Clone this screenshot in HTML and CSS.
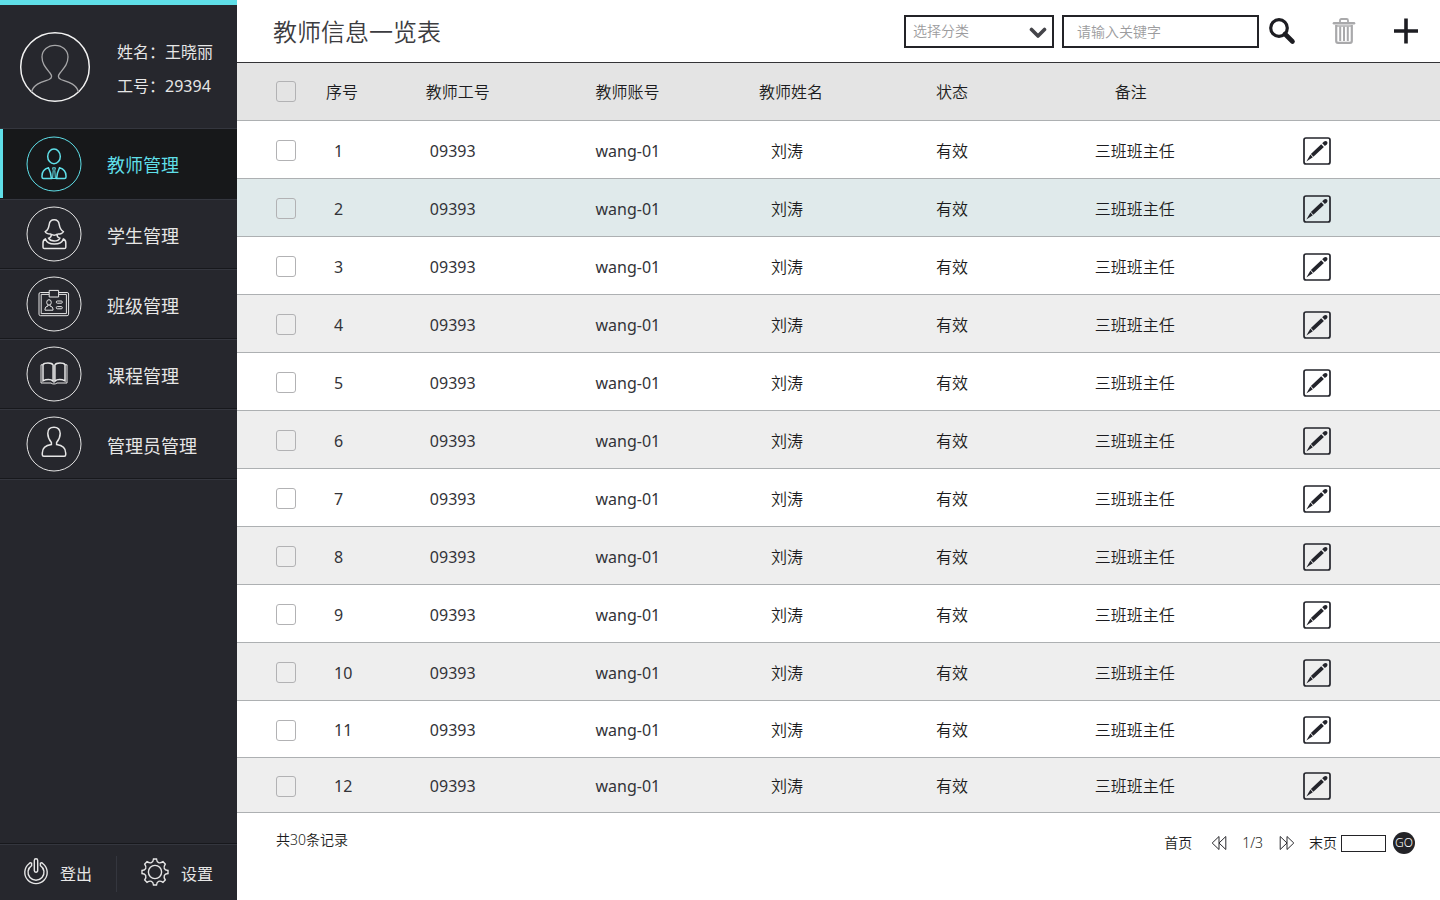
FILE: index.html
```html
<!DOCTYPE html>
<html lang="zh-CN">
<head>
<meta charset="utf-8">
<title>教师信息一览表</title>
<link rel="stylesheet" href="styles.css">
</head>
<body>
<svg class="defs" aria-hidden="true">
  <symbol id="edit" viewBox="0 0 28 28">
    <rect x="1" y="1" width="26" height="26" rx="2" fill="none" stroke="#23242b" stroke-width="1.7"/>
    <path d="M3.4 24.4 L7.4 17.6 L9.8 20.2 Z" fill="#23242b"/>
    <path d="M7.9 17 L18.2 7.2 L20.9 10 L10.4 19.7 Z" fill="#23242b"/>
    <path d="M19.2 6.3 L21 4.6 Q22.6 3.2 24 4.6 Q25.2 6 23.8 7.4 L21.9 9.1 Z" fill="#23242b"/>
  </symbol>
</svg>
<div class="app">
  <aside class="sidebar">
    <div class="profile">
      <svg class="avatar" viewBox="-36 -36 72 72" aria-hidden="true">
        <circle r="34.3" stroke="#f2f2f2" stroke-width="1.5"/>
        <path d="M-23.5 25 C-21 16 -11 14.5 -6 12.5 C-2.5 11 -3 8.5 -5 6 C-9 1 -13 -3 -13 -10 C-13 -17 -7 -21.7 0 -21.7 C7 -21.7 13 -17 13 -10 C13 -3 9 1 5 6 C3 8.5 2.5 11 6 12.5 C11 14.5 21 16 23.5 25" stroke="#a6a6a8" stroke-width="1.3"/>
      </svg>
      <div class="who">
        <span>姓名<span class="colon">：</span>王晓丽</span>
        <span>工号<span class="colon">：</span>29394</span>
      </div>
    </div>
    <nav class="menu">
      <a class="item active" href="#">
        <svg class="ring" viewBox="-28 -28 56 56" aria-hidden="true">
          <circle r="27"/>
          <g class="bold"><ellipse cx="0" cy="-7.6" rx="6.3" ry="7.3"/>
          <path d="M-5.5 3.8 C-10 5 -12 7.4 -12 12 V13 Q-12 14.5 -10.5 14.5 H-2.6 C-2.8 11 -3.8 7 -5.5 3.8 Z M5.5 3.8 C10 5 12 7.4 12 12 V13 Q12 14.5 10.5 14.5 H2.6 C2.8 11 3.8 7 5.5 3.8 Z"/></g>
          <path d="M-1.4 3.8 H1.4 L0.8 6.4 L1.4 14.5 H-1.4 L-0.8 6.4 Z M-2.6 14.5 H2.6"/>
        </svg>
        <span>教师管理</span>
      </a>
      <a class="item" href="#">
        <svg class="ring" viewBox="-28 -28 56 56" aria-hidden="true">
          <circle r="27"/>
          <g class="bold"><path d="M-3 0 C-6 0.3 -8.5 -1 -8.8 -2.4 C-5.5 -4 -5.2 -7 -4.8 -9.5 C-4 -16 4.4 -16 5.2 -9.5 C5.6 -7 6 -4 9.4 -2.4 C9 -1 6.4 0.3 3.4 0"/>
          <path d="M-3 0 C-2.4 2 -3 3.4 -5.4 4.2 C-3.5 8 4 8 5.8 4.2 C3.4 3.4 2.8 2 3.4 0 M-3 0 Q0.2 2.6 3.4 0"/>
          <path d="M-8.6 5 Q-11 6 -11 9 V13.2 Q-11 14.6 -9.6 14.6 H10.4 Q11.8 14.6 11.8 13.2 V9 Q11.8 6 9.4 5 C7 11.8 -6.2 11.8 -8.6 5 Z"/></g>
        </svg>
        <span>学生管理</span>
      </a>
      <a class="item" href="#">
        <svg class="ring" viewBox="-28 -28 56 56" aria-hidden="true">
          <circle r="27"/>
          <rect x="-15" y="-11.5" width="29.6" height="23.2" rx="1.5"/>
          <path d="M-5 -9.6 H-12.8 V9.6 H12.4 V-9.6 H4.8"/>
          <path d="M-4.8 -13.6 H4.6 V-7 H-4.8 Z" fill="#26272d"/>
          <ellipse cx="-5" cy="-1.6" rx="2.3" ry="2.7"/>
          <path d="M-6 1 V2 Q-9 2.6 -9 5 V6.2 H-1 V5 Q-1 2.6 -4 2 V1"/>
          <rect x="2.3" y="-3" width="6" height="2.2" rx="1"/><rect x="2.3" y="2.6" width="6" height="2.2" rx="1"/>
        </svg>
        <span>班级管理</span>
      </a>
      <a class="item" href="#">
        <svg class="ring" viewBox="-28 -28 56 56" aria-hidden="true">
          <circle r="27"/>
          <path class="bold" d="M-0.9 -9 Q-2 -11 -6 -11 Q-10 -11 -11 -9.4 V6.8 Q-8.6 5.6 -5.5 5.6 Q-2.4 5.6 -0.9 7.2 Z M0.9 -9 Q2 -11 6 -11 Q10 -11 11 -9.4 V6.8 Q8.6 5.6 5.5 5.6 Q2.4 5.6 0.9 7.2 Z"/>
          <path d="M-11 -9.2 H-13 V9 H-3 Q-2 10 0 10 Q2 10 3 9 H13 V-9.2 H11"/>
        </svg>
        <span>课程管理</span>
      </a>
      <a class="item" href="#">
        <svg class="ring" viewBox="-28 -28 56 56" aria-hidden="true">
          <circle r="27"/>
          <path class="bold" d="M-2.6 -1.6 C-4.6 -4 -6.2 -7 -6.2 -10.6 C-6.2 -14.4 -3.8 -16.8 0 -16.8 C3.8 -16.8 6.2 -14.4 6.2 -10.6 C6.2 -7 4.6 -4 2.6 -1.6 V0.6 C8 1.4 11.7 4 11.7 9 V10.8 Q11.7 12.3 10.2 12.3 H-10.2 Q-11.7 12.3 -11.7 10.8 V9 C-11.7 4 -8 1.4 -2.6 0.6 Z"/>
        </svg>
        <span>管理员管理</span>
      </a>
    </nav>
    <div class="side-foot">
      <button class="side-btn logout" type="button">
        <svg viewBox="-14 -14 28 28" aria-hidden="true"><rect x="-1.7" y="-13.2" width="3.4" height="13.4" rx="1.7"/><path d="M-4.4 -8.8 V-6.4 A8 8 0 1 0 4.4 -6.4 V-8.8 Q5.6 -9.8 7 -8.3 A11.2 11.2 0 1 1 -7 -8.3 Q-5.6 -9.8 -4.4 -8.8 Z"/></svg>
        <span>登出</span>
      </button>
      <button class="side-btn settings" type="button">
        <svg viewBox="-14 -14 28 28" aria-hidden="true"><circle r="6.6"/><path d="M-3.6 -9.3 Q-1.8 -10 -1.5 -13 H1.5 Q1.8 -10 3.6 -9.3 Q5.4 -8.6 8 -10.3 L10.3 -8 Q8.6 -5.4 9.3 -3.6 Q10 -1.8 13 -1.5 V1.5 Q10 1.8 9.3 3.6 Q8.6 5.4 10.3 8 L8 10.3 Q5.4 8.6 3.6 9.3 Q1.8 10 1.5 13 H-1.5 Q-1.8 10 -3.6 9.3 Q-5.4 8.6 -8 10.3 L-10.3 8 Q-8.6 5.4 -9.3 3.6 Q-10 1.8 -13 1.5 V-1.5 Q-10 -1.8 -9.3 -3.6 Q-8.6 -5.4 -10.3 -8 L-8 -10.3 Q-5.4 -8.6 -3.6 -9.3 Z"/></svg>
        <span>设置</span>
      </button>
    </div>
  </aside>

  <main class="main">
    <header class="topbar">
      <h1>教师信息一览表</h1>
      <div class="tools">
        <div class="select">
          <select aria-label="选择分类"><option>选择分类</option></select>
          <svg viewBox="0 0 18 12" aria-hidden="true"><path d="M2.5 2.5 L9 9 L15.5 2.5" fill="none" stroke="#444449" stroke-width="3.6" stroke-linecap="round" stroke-linejoin="round"/></svg>
        </div>
        <input class="keyword" type="text" placeholder="请输入关键字" aria-label="关键字">
        <button class="tool search" type="button" aria-label="搜索">
          <svg viewBox="0 0 28 28"><circle cx="11" cy="11" r="8.3" fill="none" stroke="#1d1d22" stroke-width="3.2"/><path d="M17 17 L24.5 24.5" stroke="#1d1d22" stroke-width="4.6" stroke-linecap="round"/></svg>
        </button>
        <button class="tool trash" type="button" aria-label="删除">
          <svg viewBox="0 0 28 28" fill="none" stroke="#a9a9ab"><path d="M4 6.2 H24" stroke-width="2.6" stroke-linecap="round"/><path d="M10 5.5 V3.4 Q10 2 11.4 2 H16.6 Q18 2 18 3.4 V5.5" stroke-width="1.8"/><path d="M6.2 8 V24 Q6.2 25.8 8 25.8 H20 Q21.8 25.8 21.8 24 V8" stroke-width="2.2"/><path d="M10.2 9.5 V24 M14 9.5 V24 M17.8 9.5 V24" stroke-width="2"/><path d="M6 9 H22" stroke-width="1.4"/></svg>
        </button>
        <button class="tool add" type="button" aria-label="新增">
          <svg viewBox="0 0 28 28"><path d="M14 1.5 V26.5 M2 14 H26" stroke="#1d1d22" stroke-width="3.6"/></svg>
        </button>
      </div>
    </header>

    <table class="grid">
      <colgroup><col class="c-check"><col class="c-no"><col class="c-id"><col class="c-account"><col class="c-name"><col class="c-status"><col class="c-note"><col class="c-edit"></colgroup>
      <thead>
        <tr><th><input type="checkbox" aria-label="全选"></th><th>序号</th><th>教师工号</th><th>教师账号</th><th>教师姓名</th><th>状态</th><th>备注</th><th></th></tr>
      </thead>
      <tbody>
        <tr><td><input type="checkbox" aria-label="选择第1行"></td><td>1</td><td>09393</td><td>wang-01</td><td>刘涛</td><td>有效</td><td>三班班主任</td><td><button type="button" aria-label="编辑"><svg><use href="#edit"/></svg></button></td></tr>
        <tr class="current"><td><input type="checkbox" aria-label="选择第2行"></td><td>2</td><td>09393</td><td>wang-01</td><td>刘涛</td><td>有效</td><td>三班班主任</td><td><button type="button" aria-label="编辑"><svg><use href="#edit"/></svg></button></td></tr>
        <tr><td><input type="checkbox" aria-label="选择第3行"></td><td>3</td><td>09393</td><td>wang-01</td><td>刘涛</td><td>有效</td><td>三班班主任</td><td><button type="button" aria-label="编辑"><svg><use href="#edit"/></svg></button></td></tr>
        <tr><td><input type="checkbox" aria-label="选择第4行"></td><td>4</td><td>09393</td><td>wang-01</td><td>刘涛</td><td>有效</td><td>三班班主任</td><td><button type="button" aria-label="编辑"><svg><use href="#edit"/></svg></button></td></tr>
        <tr><td><input type="checkbox" aria-label="选择第5行"></td><td>5</td><td>09393</td><td>wang-01</td><td>刘涛</td><td>有效</td><td>三班班主任</td><td><button type="button" aria-label="编辑"><svg><use href="#edit"/></svg></button></td></tr>
        <tr><td><input type="checkbox" aria-label="选择第6行"></td><td>6</td><td>09393</td><td>wang-01</td><td>刘涛</td><td>有效</td><td>三班班主任</td><td><button type="button" aria-label="编辑"><svg><use href="#edit"/></svg></button></td></tr>
        <tr><td><input type="checkbox" aria-label="选择第7行"></td><td>7</td><td>09393</td><td>wang-01</td><td>刘涛</td><td>有效</td><td>三班班主任</td><td><button type="button" aria-label="编辑"><svg><use href="#edit"/></svg></button></td></tr>
        <tr><td><input type="checkbox" aria-label="选择第8行"></td><td>8</td><td>09393</td><td>wang-01</td><td>刘涛</td><td>有效</td><td>三班班主任</td><td><button type="button" aria-label="编辑"><svg><use href="#edit"/></svg></button></td></tr>
        <tr><td><input type="checkbox" aria-label="选择第9行"></td><td>9</td><td>09393</td><td>wang-01</td><td>刘涛</td><td>有效</td><td>三班班主任</td><td><button type="button" aria-label="编辑"><svg><use href="#edit"/></svg></button></td></tr>
        <tr><td><input type="checkbox" aria-label="选择第10行"></td><td>10</td><td>09393</td><td>wang-01</td><td>刘涛</td><td>有效</td><td>三班班主任</td><td><button type="button" aria-label="编辑"><svg><use href="#edit"/></svg></button></td></tr>
        <tr><td><input type="checkbox" aria-label="选择第11行"></td><td>11</td><td>09393</td><td>wang-01</td><td>刘涛</td><td>有效</td><td>三班班主任</td><td><button type="button" aria-label="编辑"><svg><use href="#edit"/></svg></button></td></tr>
        <tr><td><input type="checkbox" aria-label="选择第12行"></td><td>12</td><td>09393</td><td>wang-01</td><td>刘涛</td><td>有效</td><td>三班班主任</td><td><button type="button" aria-label="编辑"><svg><use href="#edit"/></svg></button></td></tr>
      </tbody>
    </table>

    <footer class="bottom">
      <span class="total">共30条记录</span>
      <div class="pager">
        <a href="#">首页</a>
        <button class="step" type="button" aria-label="上一页"><svg viewBox="0 0 16 16"><path d="M8 1.5 L1.2 8 L8 14.5 Z M14.8 1.5 L8 8 L14.8 14.5 Z"/></svg></button>
        <span>1/3</span>
        <button class="step" type="button" aria-label="下一页"><svg viewBox="0 0 16 16"><path d="M1.2 1.5 L8 8 L1.2 14.5 Z M8 1.5 L14.8 8 L8 14.5 Z"/></svg></button>
        <a href="#">末页</a>
        <input class="page" type="text" aria-label="页码">
        <button class="go" type="button">GO</button>
      </div>
    </footer>
  </main>
</div>
</body>
</html>
```
FILE: styles.css
```css
* { box-sizing: border-box; }
body {
  margin: 0;
  background: #fff;
  color: #1c1c20;
  font: 350 16px/24px "Noto Sans", "Noto Sans CJK SC", sans-serif;
}
button, input, select { font: inherit; color: inherit; margin: 0; }
button { border: 0; padding: 0; background: none; cursor: pointer; }
a { color: inherit; text-decoration: none; }
svg { display: block; }
.defs { position: absolute; width: 0; height: 0; }
.app { display: flex; min-height: 100vh; }

.sidebar {
  flex: 0 0 237px;
  display: flex;
  flex-direction: column;
  background: #26272d;
  border-top: 5px solid #5fdfe8;
  color: #e6e6e6;
  font-weight: 400;
}
.sidebar svg { fill: none; stroke: currentColor; }
.profile {
  display: flex;
  align-items: center;
  gap: 26px;
  height: 123px;
  padding-left: 19px;
}
.avatar { width: 72px; height: 72px; }
.who { display: flex; flex-direction: column; gap: 10px; padding-top: 4px; }
.colon { font-family: "Noto Sans CJK TC", sans-serif; line-height: 1; }
.menu { border-bottom: 1px solid #34363e; }
.item {
  display: flex;
  align-items: center;
  gap: 25px;
  height: 70px;
  padding-left: 26px;
  border-top: 1px solid #34363e;
  border-bottom: 1px solid #17181c;
  font-size: 18px;
}
.item span { padding-top: 3px; }
.item.active {
  height: 71px;
  padding-left: 26px;
  background: #17181a;
  box-shadow: inset 3px 0 #5fdfe8;
  color: #5fdfe8;
}
.ring { width: 56px; height: 56px; }
.ring .bold { stroke-width: 1.5; }
.side-foot {
  display: flex;
  margin-top: auto;
  height: 57px;
  border-top: 1px solid #17181c;
  box-shadow: inset 0 1px #34363e;
  padding: 12px 0 8px;
}
.side-btn { display: flex; align-items: center; gap: 10px; padding-bottom: 4px; }
.side-btn svg { width: 28px; height: 28px; stroke-width: 1.4; }
.side-btn span { padding-top: 3px; }
.logout { width: 117px; padding-left: 22px; border-right: 1px solid #34363e; }
.settings { gap: 12px; padding-left: 24px; }

.main { flex: 1; min-width: 0; display: flex; flex-direction: column; }
.topbar {
  display: flex;
  align-items: center;
  justify-content: space-between;
  height: 63px;
  padding: 0 20px 0 36px;
  border-bottom: 1px solid #333336;
}
h1 { margin: 0; padding-top: 2px; font-size: 24px; line-height: 32px; font-weight: 350; color: #3c3c40; }
.tools { display: flex; align-items: center; font-size: 14px; }
.select { position: relative; width: 150px; }
.select select, .keyword {
  width: 100%;
  height: 33px;
  border: 2px solid #232327;
  border-radius: 0;
  background: #fff;
  color: #9c9c9e;
}
.select select { appearance: none; padding: 0 7px; }
.select svg { position: absolute; right: 7px; top: 12px; width: 18px; height: 12px; pointer-events: none; }
.keyword { width: 197px; margin-left: 8px; padding: 0 13px; }
.keyword::placeholder { color: #9c9c9e; opacity: 1; }
.tool svg { width: 28px; height: 28px; }
.search { margin-left: 9px; }
.trash { margin-left: 34px; }
.add { margin-left: 34px; }

.grid { width: 100%; table-layout: fixed; border-collapse: separate; border-spacing: 0; }
.c-check { width: 7.4%; }
.c-no { width: 8.3%; }
.c-id { width: 14.1%; }
.c-account { width: 13.6%; }
.c-name { width: 14.7%; }
.c-status { width: 13.2%; }
.c-note { width: 17.3%; }
.c-edit { width: 11.4%; }
.grid th, .grid td {
  height: 58px;
  padding: 2px 0 0;
  border-bottom: 1px solid #adb0b2;
  font-weight: 350;
  text-align: left;
  vertical-align: middle;
}
.grid th { padding-top: 0; background: #e4e4e4; }
.grid th:first-child, .grid td:first-child { padding-left: 39px; }
.grid td:nth-child(2) { padding-left: 8px; }
.grid td:nth-child(3) { padding-left: 4px; }
.grid td:nth-child(2), .grid td:nth-child(3), .grid td:nth-child(4) { font-weight: 400; color: #333338; }
.grid td:nth-child(5) { padding-left: 12px; }
.grid th:nth-child(7) { padding-left: 20px; }
.grid tbody tr:nth-child(even) { background: #eee; }
.grid tbody tr.current { background: #e0eaeb; }
.grid tbody tr:nth-last-child(2) td { height: 57px; }
.grid tbody tr:last-child td { height: 55px; }
.grid input {
  display: block;
  appearance: none;
  width: 20px;
  height: 21px;
  border: 1px solid #b2b2b4;
  border-radius: 3px;
}
.grid button { display: block; }
.grid button svg { width: 28px; height: 28px; }

.bottom {
  display: flex;
  justify-content: space-between;
  align-items: flex-start;
  padding: 15px 25px 0 39px;
  font-size: 14px;
}
.pager { display: flex; align-items: center; padding-top: 3px; }
.step { margin: 0 15px 0 19px; }
.step svg { width: 16px; height: 16px; fill: none; stroke: #2b2b2f; }
.step ~ .step { margin: 0 14px 0 16px; }
.page { width: 45px; height: 17px; margin-left: 4px; border: 1px solid #232327; border-radius: 0; padding: 0 3px; }
.go {
  width: 22px;
  height: 22px;
  margin-left: 7px;
  border-radius: 50%;
  background: #232327;
  color: #fff;
  font-size: 12px;
  line-height: 22px;
}
```
